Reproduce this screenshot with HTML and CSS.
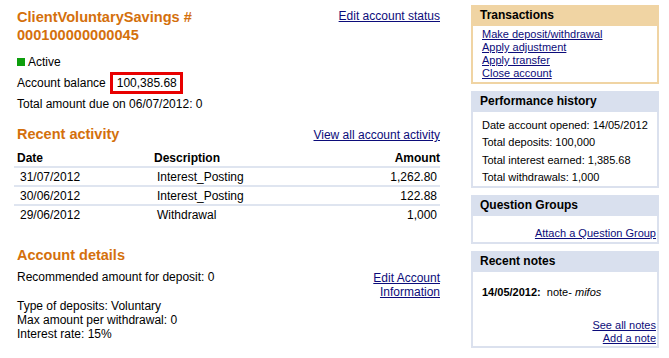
FILE: index.html
```html
<!DOCTYPE html>
<html lang="en">
<head>
    <meta charset="UTF-8">
    <title>ClientVoluntarySavings - Account</title>
    <link rel="stylesheet" href="styles.css">
</head>
<body>

<div class="page">
    <!-- Main column -->
    <div class="main-col">
        <div class="title-row">
            <h1>ClientVoluntarySavings #<br>000100000000045</h1>
            <a href="#">Edit account status</a>
        </div>

        <div class="status"><span class="status-box"></span>Active</div>
        <div class="balance">Account balance <span class="balance-value">100,385.68</span></div>
        <div class="due">Total amount due on 06/07/2012: 0</div>

        <div class="section-head">
            <h2>Recent activity</h2>
            <a href="#">View all account activity</a>
        </div>

        <table class="activity">
            <thead>
                <tr>
                    <th class="col-date">Date</th>
                    <th class="col-desc">Description</th>
                    <th class="col-amount">Amount</th>
                </tr>
            </thead>
            <tbody>
                <tr>
                    <td>31/07/2012</td>
                    <td>Interest_Posting</td>
                    <td class="col-amount">1,262.80</td>
                </tr>
                <tr>
                    <td>30/06/2012</td>
                    <td>Interest_Posting</td>
                    <td class="col-amount">122.88</td>
                </tr>
                <tr>
                    <td>29/06/2012</td>
                    <td>Withdrawal</td>
                    <td class="col-amount">1,000</td>
                </tr>
            </tbody>
        </table>

        <h2 class="details-head">Account details</h2>
        <div class="details-row">
            <div>Recommended amount for deposit: 0</div>
            <a href="#">Edit Account<br>Information</a>
        </div>
        <div class="details-list">
            <div>Type of deposits: Voluntary</div>
            <div>Max amount per withdrawal: 0</div>
            <div>Interest rate: 15%</div>
        </div>
    </div>

    <!-- Sidebar -->
    <div class="side-col">
        <div class="box box-orange">
            <div class="box-head">Transactions</div>
            <div class="box-links">
                <a href="#">Make deposit/withdrawal</a>
                <a href="#">Apply adjustment</a>
                <a href="#">Apply transfer</a>
                <a href="#">Close account</a>
            </div>
        </div>

        <div class="box">
            <div class="box-head">Performance history</div>
            <div class="box-stats">
                <div>Date account opened: 14/05/2012</div>
                <div>Total deposits: 100,000</div>
                <div>Total interest earned: 1,385.68</div>
                <div>Total withdrawals: 1,000</div>
            </div>
        </div>

        <div class="box">
            <div class="box-head">Question Groups</div>
            <div class="box-right qg">
                <a href="#">Attach a Question Group</a>
            </div>
        </div>

        <div class="box">
            <div class="box-head">Recent notes</div>
            <div class="note"><b>14/05/2012:</b>&nbsp; note- <i>mifos</i></div>
            <div class="box-right notes-links">
                <a href="#">See all notes</a>
                <a href="#">Add a note</a>
            </div>
        </div>
    </div>
</div>

</body>
</html>
```

FILE: styles.css
```css
* {
    box-sizing: border-box;
}

body {
    margin: 0;
    font-family: "Liberation Sans", Arial, Helvetica, sans-serif;
    font-size: 12px;
    color: #000;
    background-color: white;
}

a {
    color: #0c0c7a;
    text-decoration: underline;
}

.page {
    display: flex;
    gap: 31px;
    padding: 8px 10px 0 17px;
}

/* Main column */
.main-col {
    width: 423px;
}

.title-row {
    display: flex;
    justify-content: space-between;
    align-items: flex-start;
}

.title-row h1 {
    margin: 0;
    font-size: 14.6px;
    line-height: 18px;
    color: #d4700c;
}

.title-row a {
    line-height: 16px;
}

.status {
    display: flex;
    align-items: center;
    margin-top: 10px;
    height: 16px;
}

.status-box {
    width: 8px;
    height: 8px;
    background-color: #0d9e0d;
    margin-right: 3px;
}

.balance {
    display: flex;
    align-items: center;
    margin-top: 2px;
    height: 22px;
}

.balance-value {
    display: inline-block;
    margin-left: 4px;
    border: 3px solid #e80000;
    padding: 0 3px 0 4px;
    height: 22px;
    line-height: 16px;
}

.due {
    margin-top: 2px;
    line-height: 16px;
}

.section-head {
    display: flex;
    justify-content: space-between;
    align-items: baseline;
    margin-top: 13px;
}

.section-head h2,
.details-head {
    margin: 0;
    font-size: 14.5px;
    line-height: 18px;
    color: #d4700c;
}

/* Activity table */
.activity {
    width: 426px;
    margin-left: -3px;
    margin-top: 5px;
    border-collapse: collapse;
}

.activity th {
    font-weight: bold;
    text-align: left;
    padding: 3px 0 1px 3px;
    height: 18px;
    border-bottom: 2px solid #dfe5f0;
}

.activity td {
    padding: 0 3px 0 6px;
    height: 19px;
    border-bottom: 2px solid #dfe5f0;
}

.activity tbody tr:last-child td {
    border-bottom: none;
}

.activity .col-date {
    width: 137px;
}

.activity th.col-amount {
    text-align: right;
    padding-right: 0;
}

.activity td.col-amount {
    text-align: right;
}

.details-head {
    margin-top: 22px;
}

.details-row {
    display: flex;
    justify-content: space-between;
    align-items: flex-start;
    margin-top: 6px;
    line-height: 14px;
}

.details-row a {
    text-align: right;
    margin-top: 1px;
}

.details-list {
    margin-top: 0;
    line-height: 14px;
}

/* Sidebar */
.side-col {
    width: 188px;
    margin-top: -3px;
    display: flex;
    flex-direction: column;
    gap: 7px;
    font-size: 11px;
}

.box {
    border: 2px solid #dbe1ee;
    border-top: none;
}

.box-head {
    background-color: #d9e0ee;
    font-weight: bold;
    font-size: 12px;
    height: 21px;
    line-height: 21px;
    padding-left: 9px;
    margin: 0 -2px;
}

.box-orange {
    border-color: #f0d4a3;
}

.box-orange .box-head {
    background-color: #f0d4a3;
}

.box-links {
    display: flex;
    flex-direction: column;
    padding: 2px 9px 2px;
    line-height: 13px;
}

.box-stats {
    padding: 5px 9px 0;
    line-height: 17.3px;
}

.box-right {
    display: flex;
    flex-direction: column;
    align-items: flex-end;
    padding-right: 1px;
}

.qg {
    padding-top: 10px;
    padding-bottom: 2px;
    line-height: 14px;
}

.note {
    padding: 13px 9px 0;
    line-height: 14px;
}

.notes-links {
    padding-top: 20px;
    padding-bottom: 1px;
    line-height: 13px;
}
```
